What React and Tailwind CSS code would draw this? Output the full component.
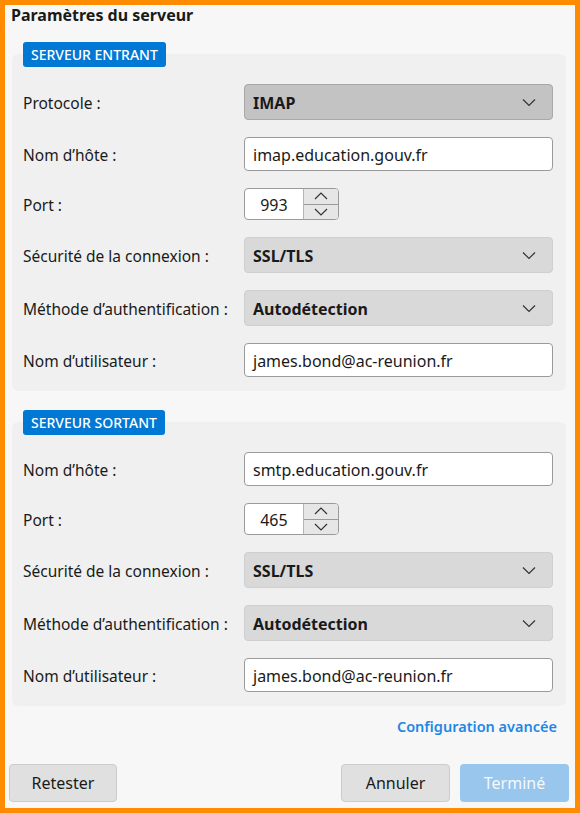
import React from "react";

const font = { fontFamily: '"Noto Sans", "Open Sans", sans-serif' };

function Chevron() {
  return (
    <svg width="14" height="9" viewBox="0 0 14 9" fill="none" className="shrink-0">
      <path d="M1 1.5 L7 7.5 L13 1.5" stroke="#333" strokeWidth="1.2" />
    </svg>
  );
}

function Select({ value, dark }) {
  return (
    <div
      className={`flex h-[36px] w-[309px] items-center justify-between rounded-[4px] border px-[8px] pr-[16px] ${
        dark ? "border-[#a9a9a9] bg-[#c3c3c3]" : "border-[#cfcfcf] bg-[#d9d9d9]"
      }`}
    >
      <span className="pt-[1px] text-[16px] font-bold text-[#1a1a1a]">{value}</span>
      <Chevron />
    </div>
  );
}

function Input({ value }) {
  return (
    <div className="flex h-[34px] w-[309px] items-center rounded-[4px] border border-[#9a9a9a] bg-white px-[8px] pt-[1px] text-[16px] text-[#1a1a1a]">
      {value}
    </div>
  );
}

function Port({ value }) {
  return (
    <div className="flex h-[32px] w-[95px] overflow-hidden rounded-[4px] border border-[#9a9a9a] bg-white">
      <div className="flex w-[59px] items-center justify-center pt-[1px] text-[16px] text-[#1a1a1a]">{value}</div>
      <div className="flex w-[36px] flex-col border-l border-[#b5b5b5] bg-[#e6e6e6]">
        <div className="flex flex-1 items-center justify-center border-b border-[#9a9a9a]">
          <svg width="14" height="8" viewBox="0 0 14 8" fill="none">
            <path d="M1 7 L7 1 L13 7" stroke="#333" strokeWidth="1.2" />
          </svg>
        </div>
        <div className="flex flex-1 items-center justify-center">
          <svg width="14" height="8" viewBox="0 0 14 8" fill="none">
            <path d="M1 1 L7 7 L13 1" stroke="#333" strokeWidth="1.2" />
          </svg>
        </div>
      </div>
    </div>
  );
}

function Row({ label, children }) {
  return (
    <div className="flex items-center">
      <div className="w-[221px] pt-[3px] text-[15.5px] text-[#1a1a1a]">{label}</div>
      {children}
    </div>
  );
}

function Badge({ children }) {
  return (
    <div className="relative z-10 ml-[18px] flex h-[25px] w-fit items-center rounded-[3px] bg-[#0078d4] px-[8px] text-[14px] font-medium text-white">
      {children}
    </div>
  );
}

function Panel({ children }) {
  return (
    <div className="ml-[7px] mr-[9px] mt-[-13px] flex flex-col gap-[17px] rounded-[6px] bg-[#f0f0f0] pb-[14px] pl-[11px] pr-[13px] pt-[30px]">
      {children}
    </div>
  );
}

export default function App() {
  return (
    <div className="h-[813px] w-[580px] bg-[#ff8c00] p-[5px]" style={font}>
      <div className="flex h-full flex-col bg-[#f7f7f7]">
        <div className="pl-[6px] text-[16px] font-bold leading-[21px] text-[#1a1a1a]">
          Paramètres du serveur
        </div>
        <div className="mt-[16px]">
          <Badge>SERVEUR ENTRANT</Badge>
          <Panel>
            <Row label="Protocole :">
              <Select value="IMAP" dark />
            </Row>
            <Row label="Nom d’hôte :">
              <Input value="imap.education.gouv.fr" />
            </Row>
            <Row label="Port :">
              <Port value="993" />
            </Row>
            <Row label="Sécurité de la connexion :">
              <Select value="SSL/TLS" />
            </Row>
            <Row label="Méthode d’authentification :">
              <Select value="Autodétection" />
            </Row>
            <Row label="Nom d’utilisateur :">
              <Input value="james.bond@ac-reunion.fr" />
            </Row>
          </Panel>
        </div>
        <div className="mt-[19px]">
          <Badge>SERVEUR SORTANT</Badge>
          <Panel>
            <Row label="Nom d’hôte :">
              <Input value="smtp.education.gouv.fr" />
            </Row>
            <Row label="Port :">
              <Port value="465" />
            </Row>
            <Row label="Sécurité de la connexion :">
              <Select value="SSL/TLS" />
            </Row>
            <Row label="Méthode d’authentification :">
              <Select value="Autodétection" />
            </Row>
            <Row label="Nom d’utilisateur :">
              <Input value="james.bond@ac-reunion.fr" />
            </Row>
          </Panel>
        </div>
        <div className="mr-[18px] mt-[10px] text-right text-[14.5px] font-semibold text-[#1e88e5]">
          Configuration avancée
        </div>
        <div className="mt-auto flex items-center pb-[6px] pl-[4px] pr-[6px]">
          <div className="flex h-[38px] w-[108px] items-center justify-center rounded-[4px] border border-[#cccccc] bg-[#e0e0e0] text-[16px] text-[#1a1a1a]">
            Retester
          </div>
          <div className="ml-auto flex h-[38px] w-[109px] items-center justify-center rounded-[4px] border border-[#cccccc] bg-[#e0e0e0] text-[16px] text-[#1a1a1a]">
            Annuler
          </div>
          <div className="ml-[10px] flex h-[38px] w-[109px] items-center justify-center rounded-[4px] bg-[#98c6ec] text-[16px] text-[#f4f9fd]">
            Terminé
          </div>
        </div>
      </div>
    </div>
  );
}
